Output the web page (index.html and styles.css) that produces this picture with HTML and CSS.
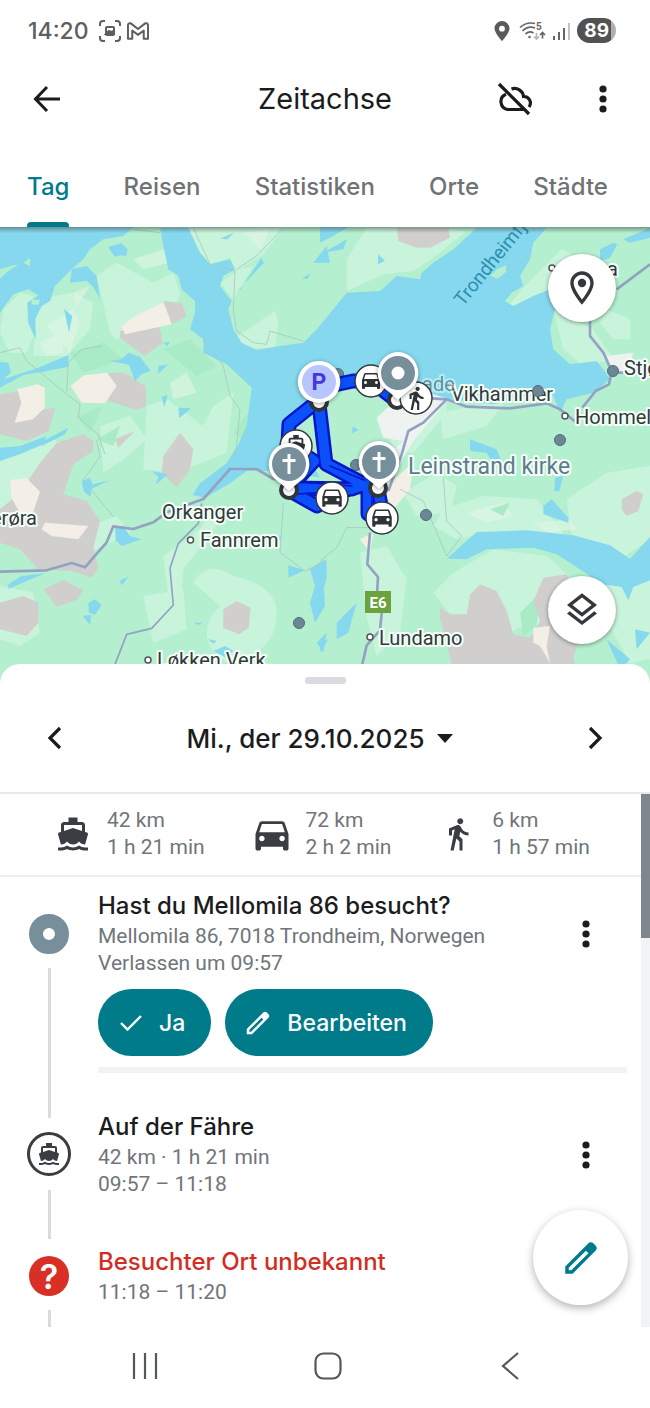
FILE: index.html
```html
<!DOCTYPE html>
<html lang="de">
<head>
<meta charset="utf-8">
<meta name="viewport" content="width=device-width, initial-scale=1">
<title>Zeitachse</title>
<link rel="stylesheet" href="styles.css">
</head>
<body>
<svg class="sprite" aria-hidden="true">
  <symbol id="ferry" viewBox="0 0 24 24"><path d="M20 21c-1.39 0-2.78-.47-4-1.32-2.44 1.71-5.56 1.71-8 0C6.78 20.53 5.39 21 4 21H2v2h2c1.38 0 2.74-.35 4-.99 2.52 1.29 5.48 1.29 8 0 1.26.65 2.62.99 4 .99h2v-2h-2zM3.95 19H4c1.6 0 3.02-.88 4-2 .98 1.12 2.4 2 4 2s3.02-.88 4-2c.98 1.12 2.4 2 4 2h.05l1.89-6.68c.08-.26.06-.54-.06-.78s-.34-.42-.6-.5L20 10.62V6c0-1.1-.9-2-2-2h-3V1H9v3H6c-1.1 0-2 .9-2 2v4.62l-1.29.42c-.26.08-.48.26-.6.5s-.15.52-.06.78L3.95 19zM6 6h12v3.97L12 8 6 9.970V6z"/></symbol>
  <symbol id="car" viewBox="0 0 24 24"><path d="M18.92 6.01C18.72 5.42 18.16 5 17.5 5h-11c-.66 0-1.21.42-1.42 1.01L3 12v8c0 .55.45 1 1 1h1c.55 0 1-.45 1-1v-1h12v1c0 .55.45 1 1 1h1c.55 0 1-.45 1-1v-8l-2.080-5.990zM6.5 16c-.83 0-1.5-.67-1.5-1.5S5.67 13 6.5 13s1.5.67 1.5 1.5S7.33 16 6.5 16zm11 0c-.83 0-1.5-.67-1.5-1.5s.67-1.5 1.5-1.5 1.5.67 1.5 1.5-.67 1.5-1.5 1.5zM5 11l1.5-4.5h11L19 11H5z"/></symbol>
  <symbol id="walk" viewBox="0 0 24 24"><path d="M13.5 5.5c1.1 0 2-.9 2-2s-.9-2-2-2-2 .9-2 2 .9 2 2 2zM9.8 8.9L7 23h2.1l1.8-8 2.1 2v6h2v-7.5l-2.1-2 .6-3C14.8 12 16.8 13 19 13v-2c-1.9 0-3.5-1-4.3-2.4l-1-1.6c-.4-.6-1-1-1.7-1-.3 0-.5.1-.8.1L6 8.3V13h2V9.6l1.8-.7z"/></symbol>
  <symbol id="pen" viewBox="0 0 24 24"><path d="M20.41 4.94l-1.35-1.35c-.78-.78-2.05-.78-2.83 0L3 16.82V21h4.18L20.41 7.77c.79-.78.79-2.05 0-2.83zM6.41 19.06L5 19v-1.36l9.82-9.82 1.41 1.41z"/></symbol>
  <symbol id="more" viewBox="0 0 8 28"><circle cx="4" cy="4" r="3.6"/><circle cx="4" cy="14" r="3.6"/><circle cx="4" cy="24" r="3.6"/></symbol>
  <symbol id="cross" viewBox="0 0 20 22"><path d="M8.5 1h3v5h5v3h-5v12h-3V9h-5V6h5z"/></symbol>
</svg>

<div class="screen">
  <div class="status">
    <span class="clock">14:20</span>
    <svg width="22" height="22" viewBox="0 0 22 22" fill="none" stroke="#5f5f5f" stroke-width="2"><path d="M1 6V4a3 3 0 0 1 3-3h2M16 1h2a3 3 0 0 1 3 3v2M21 16v2a3 3 0 0 1-3 3h-2M6 21H4a3 3 0 0 1-3-3v-2"/><rect x="7" y="7" width="8" height="8" rx="1"/><path d="M7 14l3-3 2 1 3-1v3z" fill="#5f5f5f"/></svg>
    <svg width="22" height="18" viewBox="0 0 23 18" fill="none" stroke="#5f5f5f" stroke-width="2.100" stroke-linejoin="round"><path d="M1 3.200Q1 1 3 1h1l7.500 6L19 1h1q2 0 2 2.200V17h-4.500V8.500L11.500 13 5.500 8.500V17H1z"/></svg>
    <span class="spacer"></span>
    <svg width="16" height="20" viewBox="0 0 16 20" fill="#5a5a5a"><path fill-rule="evenodd" d="M8 0a7.500 7.500 0 0 1 7.500 7.500C15.500 12 8 20 8 20S.5 12 .5 7.500A7.500 7.500 0 0 1 8 0zm0 4.800a2.900 2.900 0 1 0 0 5.800 2.900 2.900 0 0 0 0-5.800z"/></svg>
    <svg class="wifi" width="28" height="20" viewBox="0 0 28 20" fill="none" stroke="#666" stroke-width="1.700"><path d="M1 6.500Q7.500.5 16 2.500M3.500 10Q9 4.500 16 7M6.500 13q4-3.500 8-1"/><circle cx="10.500" cy="16" r="1.300" fill="#666" stroke="none"/><path d="M17.500 12v6m-2.500-2.500 2.500 2.500 2.500-2.500" stroke="#b5b5b5"/><path d="M23.500 17.500v-6m-2.500 2.500 2.500-2.500 2.500 2.500"/><text x="17" y="9" class="wifi-gen">5</text></svg>
    <svg width="18" height="18" viewBox="0 0 18 18" fill="#666"><path d="M0 14h2v4H0zM5 10h2v8H5zM10 6h2v12h-2z"/><path d="M15 1h2v17h-2z" fill="#c4c4c4"/></svg>
    <span class="battery">89</span>
  </div>

  <header class="appbar">
    <button class="icon-btn" aria-label="Zurück"><svg width="28" height="28" viewBox="0 0 28 28" fill="none" stroke="#1b1c1e" stroke-width="3"><path d="M27 14H3M14 2 2.500 14 14 26"/></svg></button>
    <h1>Zeitachse</h1>
    <button class="icon-btn cloud" aria-label="Sicherung aus"><svg width="36" height="34" viewBox="0 0 36 34" fill="none" stroke="#1b1c1e" stroke-width="3.200"><path d="M2 2l30 30M26.500 27.500H10.500A8 8 0 0 1 9 12.200M14.500 7A9 9 0 0 1 26.500 14.500 6.500 6.500 0 0 1 32 25"/></svg></button>
    <button class="icon-btn" aria-label="Mehr"><svg width="8" height="28" fill="#1b1c1e"><use href="#more"/></svg></button>
  </header>

  <nav class="tabs">
    <a class="tab active" href="#tag">Tag</a>
    <a class="tab" href="#reisen">Reisen</a>
    <a class="tab" href="#statistiken">Statistiken</a>
    <a class="tab" href="#orte">Orte</a>
    <a class="tab" href="#staedte">Städte</a>
  </nav>

  <main class="map">
    <svg class="map-canvas" viewBox="0 3 1950 1383" preserveAspectRatio="xMidYMin slice" role="img" aria-label="Karte der Region Trondheim">
      <rect y="0" width="1950" height="1400" fill="#b4f0cf"/>
      <!-- pale vegetation -->
      <g fill="#c9f4dc">
        <path d="M290 150l60-40 110 60 60-30 20 60-30 90-100 10-60 40-20-20zM10 250l50-50 40 10-20 70 20 50-20 50-50 0-30-60zM110 260l50-50 60-10 60 30-10 80-70 80-100 0zM560 5h290l-60 80-80 50-20-40-60 20-40-50zM660 170l60-40 40-10-60 100zM715 330l110-75 10 30-10 80-100 0zM440 540l60-20 110 80 30-60 60-40-20 180-150 60-100-10zM300 600l90-30 50 70-70 60-60 40zM0 700l160-60 60 40-120 120 0 80-100-30zM100 900l90 30 160-60 40 50-120 60-110 0zM0 1080l100 20 20 120-60 40-60-20zM430 1110l120-20 10 120-100 40zM580 1070q40-70 120-20 130 30 130 110 0 90-80 130-60 60-120-30-30-60 30-120zM490 990l110-80 30-50 40 10-60 80-60 80-10 160-30-40z"/>
        <path d="M1040 100l60-95h190l110 10-100 80-60 40-90 10-110 50zM1575 180l110-110 40 20-60 90-60 50-80 10zM1660 250l120 60 60 90-90 20-60-50zM1820 250l70 30 0 60-50 0-40-50zM1160 600l60-80 120-10 0 50-100 120-60-10zM1320 560l200-40-60 80-130 40zM1210 800l100-60 60 40-20 80-100 10zM1330 850l120-40 160 10 80 100-40 30-200-30-80 20-70-40zM1700 820l120-80 130-20v220l-90 60-140-30zM1300 1100l60-60 120-70 160 20 90 80-30 160-120-40-90 60-60-20-50-30zM1080 980l80-20 60 100-20 160-70 70-30-120z"/>
        <path d="M1840 1010l110-10v300l-60 10-90-160z"/>
      </g>
      <g fill="#e3f5e6" opacity=".6"><path d="M140 300l80-50 20 40-30 90zM220 200l50-20-40 60zM400 100l90-30 20 40-80 20zM730 20l80-10-30 60zM510 470l50-30 30 60-70 20zM120 350l60-30 10 60-50 10zM1400 860l110-30 30 40-80 20zM1600 890l110-10 20 30-90 10z"/></g>
      <g fill="#a9ebc6"><path d="M210 380l100-30 60 50-120 40zM490 370l80-30 80 80-60 30zM700 620l60-80 0 120zM230 570l80-30-40 80zM290 640l70-40-20 60z" /><path d="M1560 1160l60-60-10 100-40 30zM1470 850l60-20-20 40z"/></g>
      <!-- rock and built-up areas -->
      <g fill="#d1cfcd">
        <path d="M490 225l55 5 15 40-45 25zM360 315l90-15 30 5 8 45-55 40-73-55zM325 440l50 0 62 40 2 60-30 12-85-28zM0 505l60-10 40 60 66-10-20 70-66 30-80-20zM170 650l80-25 30 20v30l-60 40-30 90 70 20 40 60-20 80 15 60-20 30-60-20-100-5-55-60-60-20v-100l60-50 60-90zM345 640l60-25-50 50zM490 690l50-70 40 50-10 60-40 55-45-45zM130 1090l60-28 60 30-20 30-60 20zM0 1130l70-20 45 20v60l-35 40-80-20zM670 1150l40-25 42 20-5 60-30 20-48-20z"/>
        <path d="M1190 5h155l5 30-60 30-40 0-55-20zM1320 1145l30 20 50 0 10-60 30-30 50 20 30 60 20 70 50 10 30-50-20-60 30-70 70-10 40 60-20 50 20 40 0 40-20 60 20 80h-370l-30-120-20-80zM1865 820l45-25 20 10-15 50-35 15-15-20z"/>
      </g>
      <g fill="#f4efe6"><path d="M490 230l25 65-140 30-10-25 40-30zM212 480l40-32 70-8 28 40-35 52-70-2zM52 490l60-15 22 10v60l-35 35-55 10 20-60zM30 762l50-5 40 40-20 60-30 20-35-60zM135 890l130 10-30 40-80-10-30-20z"/><path d="M1600 1205l50-5-10 60 10 50-30-50-20-10zM1170 770l70-60-10 80-50 60-20-40zM1080 940l40-20-10 60z"/></g>
      <!-- Trondheim suburbs -->
      <path d="M1210 500l90 0 50 15-60 70-50 60-60 100-20 40-40-60 90-80-60-10-20-60zM1820 390l80-10-20 60-50 10z" fill="#eef2f1"/>
      <g fill="#86d8ee">
        <path d="M480 5L490 60 505 130 535 150 545 190 585 225 585 260 570 310 610 340 610 380 680 415 755 485 740 600 715 655 680 712 600 772 578 807 615 815 690 772 740 735 850 735 960 755 930 700 850 650 850 600 920 540 980 500 1040 460 1100 460 1180 480 1300 505 1350 520 1480 535 1600 510 1660 510 1680 560 1700 520 1780 500 1830 460 1810 430 1790 405 1710 415 1660 370 1650 310 1665 250 1650 190 1600 210 1540 240 1515 225 1535 200 1570 180 1560 150 1590 100 1600 50 1640 5 1430 5 1360 70 1300 110 1265 140 1260 160 1190 150 1140 195 1040 200 1000 250 950 310 910 350 840 360 770 372 725 350 700 310 685 250 695 225 660 180 670 150 705 130 690 100 630 115 600 80 565 5z"/>
        <path d="M0 0H405L370 30 310 40 270 70 250 100 215 130 165 180 150 225 125 240 105 280 108 340 85 290 82 230 115 208 85 190 40 205 10 245 0 260z"/>
        <path d="M215 130l45-10 30 30 10 68-20-35-20-18-50 5zM722 190l62-95 8 15-78 84zM0 408l25 2 8 30-23 20 105-35 90-38v35l-75 15-60 10-70 38zM192 248l25 22-10 50zM325 62l40-10 18 18-5 20-18-2-15 5-15-20zM330 405l35-5 20-20 35 12 32 42-27 10-20 22-18-50zM475 420l30-5-30 28zM485 512l18-4-10 36zM535 545l38 2-35 30zM488 350l22-2-8 12zM660 38l42-18-20 20zM120 650l85-45-10 20-70 35zM905 158l26-16-8 16zM940 110l40-50 10 50z"/>
        <path d="M0 665l60-5 80-30-10 25-70 30-60 20zM245 765l25-10 8 20 50-12-52 25-5 25-20-18zM455 735l48 10-36 32 8-25zM345 905l25-5 20 30 35 10-60 20-18-18zM25 1075l40-25 70-8-60 25-50 22zM265 1130l20-10 20 18-20 28-18-6zM248 1170l25-3-2 30zM358 1065l28-15-20 28zM580 1190h30l-15 6zM625 1240l25 5-10 8zM640 1275l35-15 25 15-20 20zM865 1018l50 15-50 22zM930 1030l45-30-5 60 5 80-30 50-15-60 15-50zM950 1250l30-30-10 60zM830 925l15 10-10 15z"/>
        <path d="M960 0h90l-50 30-40 20zM970 80l70-40-10 30zM1135 85l20 20-22 10zM1800 70l40-20 12 5-22 40-30 10zM1870 40l80-35v30l-60 15zM1410 640l80 30 20 50-30-5-20-35-50-5zM1630 840l25-20 50 55v15l-75-25zM1665 755l25-5-12 45h-15zM1340 998l90-80 150-5 140 15 110 30 60 40 60-65v130l-50 20-15 40-20-40-65-10-40-30-90-58-70-20-140 5-60 30z"/>
        <path d="M1010 1190l60-60-25 90-35 20zM960 1030l20-30v60l-20 60zM960 1250l25-10-25 40zM1820 1240l70 60-30 30zM1905 1210l45 10-40 50zM1058 600l18 12-20 10z"/>
      </g>
      <path d="M0 130l55-16-35 25-20 20zM70 110l20-15v25zM95 220l25 2-5 15-20-2zM1470 150l20-20 28-12 0 20-25 20z" fill="#b4f0cf"/>
      <!-- minor roads -->
      <g fill="none" stroke="#a9c6bd" stroke-width="3" opacity=".8">
        <path d="M0 380l60-15 20 40 60 50 60 50 40 30-5 40 60 50 20 60M400 10l80 10M580 5l50 110 75 20-5 120 10 60 50 35 40 5 10-40 100 30M710 130l60-40 80-85M200 500l5-90 40-40 60-10M610 340l60 80 20 90 30 40-15 150M290 642l10 50-50 70 90 110M850 830l-10 150 75 55 60-30M1200 790l70 35 70 165 45-60-45-45-10-130M1120 905h-80l-30 60-50 40"/>
      </g>
      <!-- main roads -->
      <g fill="none" stroke="#93a2c2" stroke-linejoin="round">
        <path stroke-width="8" d="M0 1037l140-4 75-22 40 13 30-35 35-40 20-48 60 8 60-20 40-30 110-40 80-90h80l50 30 60 5M1110 920l-8 95 32 38-4 70 15 40-5 50-40 45-15 65M1260 515l80 5-70 70-45 25-20 70-40 110M1340 520l60 22 130 5 110-15 40 18 50 40"/>
        <path stroke-width="8" d="M1770 270v60l40 50 25 55-8 40-40 20-40 50M1850 190l100-75M1830 440l40 0"/>
        <path stroke-width="5" d="M345 1315l35-90 75-18 65-70-10-110 25-75 60-60 10-60"/>
      </g>
      <!-- place labels and pins, drawn in screen units -->
      <g transform="scale(3) translate(0 -226)">
        <g class="place">
          <text x="162" y="519">Orkanger</text>
          <text x="200" y="547">Fannrem</text>
          <text x="37" y="525" text-anchor="end">erøra</text>
          <text x="157" y="667">Løkken Verk</text>
          <text x="379" y="645">Lundamo</text>
          <text x="451" y="401">Vikhammer</text>
          <text x="575" y="424">Hommel</text>
          <text x="624" y="375">Stjø</text>
          <text x="618" y="276" text-anchor="end">a</text>
          <text x="422" y="391" opacity=".45">ade</text>
        </g>
        <text class="place poi" x="408" y="474">Leinstrand kirke</text>
        <text class="fjord" transform="translate(463 307) rotate(-51)">Trondheimfjord</text>
        <g fill="#fff" stroke="#555" stroke-width="1.500"><circle cx="190.500" cy="540" r="3"/><circle cx="148" cy="660" r="3"/><circle cx="370" cy="637" r="3"/><circle cx="565" cy="416" r="3"/><circle cx="552" cy="268" r="3"/></g>
        <g fill="#6b8796" stroke="#536b79"><circle cx="613" cy="371" r="5.500"/><circle cx="538" cy="391" r="5.500"/><circle cx="560" cy="440" r="5.500"/><circle cx="426" cy="515" r="5.500"/><circle cx="299" cy="623" r="5.500"/><circle cx="338" cy="374" r="5.500"/><circle cx="356" cy="465" r="5.500"/></g>
        <rect x="365" y="591" width="26" height="22" fill="#6ba23e"/><text x="378" y="608" class="shield">E6</text>
        <!-- travelled route -->
        <g fill="none" stroke-linejoin="round" stroke-linecap="round">
          <path stroke="#0717c6" stroke-width="15" d="M314 404l-25 20-1 20 26 17-20 22M319 404l7 60 36 19 16 8M292 488l60 1 20-10M292 492l25 14 22-14 30-8M368 485v29M378 490l5 26M325 387l28-6h18l22 17"/>
          <path stroke="#0b50fa" stroke-width="10" d="M314 404l-25 20-1 20 26 17-20 22M319 404l7 60 36 19 16 8M292 488l60 1 20-10M292 492l25 14 22-14 30-8M368 485v29M378 490l5 26M325 387l28-6h18l22 17"/>
          <path stroke="#0717c6" stroke-width="1.500" d="M298 482l54 4M298 494l40-3M330 466l34 14M372 494v20"/>
        </g>
        <g fill="#fff" stroke="#333638" stroke-width="4"><circle cx="319" cy="402" r="8"/><circle cx="397" cy="400" r="8"/><circle cx="289" cy="490" r="8"/><circle cx="378" cy="488" r="8"/></g>
        <g fill="#fff" stroke="#35383b" stroke-width="1.500"><circle cx="371" cy="381" r="16"/><circle cx="416" cy="398" r="16"/><circle cx="296" cy="446" r="16"/><circle cx="332" cy="498" r="16"/><circle cx="382" cy="518" r="16"/></g>
        <g fill="#2f3336">
          <use href="#car" x="359" y="368" width="24" height="24"/>
          <use href="#walk" x="403" y="385" width="26" height="26"/>
          <use href="#ferry" x="285" y="434" width="22" height="22"/>
          <use href="#car" x="319" y="484" width="26" height="26"/>
          <use href="#car" x="369" y="504" width="26" height="26"/>
        </g>
        <g fill="#fff" class="pin">
          <path d="M319 361a21 21 0 0 1 11 39q-6 3-11 3t-11-3a21 21 0 0 1 11-39z"/>
          <path d="M398 352a21 21 0 0 1 14 36q-8 6-14 12-6-6-14-12a21 21 0 0 1 14-36z"/>
          <path d="M289 443a21 21 0 0 1 14 36q-8 6-14 12-6-6-14-12a21 21 0 0 1 14-36z"/>
          <path d="M379 441a21 21 0 0 1 14 36q-8 6-14 12-6-6-14-12a21 21 0 0 1 14-36z"/>
        </g>
        <circle cx="319" cy="382" r="17" fill="#b8c5ff"/><text x="319" y="390" class="parking">P</text>
        <g fill="#778f9b"><circle cx="398" cy="373" r="17"/><circle cx="289" cy="464" r="17"/><circle cx="379" cy="462" r="17"/></g>
        <g fill="#fff"><circle cx="398" cy="373" r="6.500"/><use href="#cross" x="279" y="453" width="20" height="22"/><use href="#cross" x="369" y="451" width="20" height="22"/></g>
      </g>
    </svg>
    <button class="map-btn locate" aria-label="Orte anzeigen"><svg width="40" height="40" viewBox="0 0 24 24" fill="#35383b"><path d="M12 2C8.130 2 5 5.130 5 9c0 5.250 7 13 7 13s7-7.750 7-13c0-3.870-3.130-7-7-7zM7 9c0-2.760 2.240-5 5-5s5 2.240 5 5c0 2.880-2.880 7.190-5 9.880C9.920 16.210 7 11.850 7 9z"/><circle cx="12" cy="9" r="2.500"/></svg></button>
    <button class="map-btn layers" aria-label="Kartenebenen"><svg width="40" height="40" viewBox="0 0 24 24" fill="#35383b"><path d="M12 2 3 9l9 7 9-7zm0 2.530L17.740 9 12 13.470 6.260 9zM12 18.540l-7.370-5.730L3 14.070l9 7 9-7-1.630-1.270z"/></svg></button>
  </main>

  <section class="sheet">
    <div class="handle"></div>
    <div class="datebar">
      <button class="icon-btn" aria-label="Vorheriger Tag"><svg width="16" height="24" viewBox="0 0 16 24" fill="none" stroke="#1b1c1e" stroke-width="3.200"><path d="M14 2 4 12l10 10"/></svg></button>
      <button class="date">Mi., der 29.10.2025<svg width="16" height="9" viewBox="0 0 16 9" fill="#1b1c1e"><path d="M0 0h16L8 9z"/></svg></button>
      <button class="icon-btn" aria-label="Nächster Tag"><svg width="16" height="24" viewBox="0 0 16 24" fill="none" stroke="#1b1c1e" stroke-width="3.200"><path d="M2 2l10 10L2 22"/></svg></button>
    </div>
    <div class="scroll">
      <div class="content">
        <div class="stats">
          <div class="stat"><span class="stat-icon"><svg width="36" height="36"><use href="#ferry"/></svg></span><p>42 km<br>1 h 21 min</p></div>
          <div class="stat"><span class="stat-icon"><svg width="44" height="44"><use href="#car"/></svg></span><p>72 km<br>2 h 2 min</p></div>
          <div class="stat"><span class="stat-icon"><svg width="36" height="36"><use href="#walk"/></svg></span><p>6 km<br>1 h 57 min</p></div>
        </div>
        <article class="entry first">
          <div class="rail"><span class="dot place-dot"></span><span class="line"></span></div>
          <div class="body">
            <div class="row">
              <div class="text"><h2>Hast du Mellomila 86 besucht?</h2><p>Mellomila 86, 7018 Trondheim, Norwegen</p><p>Verlassen um 09:57</p></div>
              <button class="icon-btn" aria-label="Mehr"><svg width="8" height="28" fill="#1b1c1e"><use href="#more"/></svg></button>
            </div>
            <div class="actions">
              <button class="pill"><svg width="22" height="18" viewBox="0 0 22 18" fill="none" stroke="#fff" stroke-width="2.400"><path d="M1 9l6.500 6.500L21 2"/></svg>Ja</button>
              <button class="pill edit"><svg width="30" height="30" fill="#fff"><use href="#pen"/></svg>Bearbeiten</button>
            </div>
            <div class="divider"></div>
          </div>
        </article>
        <article class="entry second">
          <div class="rail"><span class="line short"></span><span class="dot ferry-dot"><svg width="24" height="24" fill="#3a3d42"><use href="#ferry"/></svg></span><span class="line"></span></div>
          <div class="body">
            <div class="row">
              <div class="text"><h2>Auf der Fähre</h2><p>42 km · 1 h 21 min</p><p>09:57 – 11:18</p></div>
              <button class="icon-btn" aria-label="Mehr"><svg width="8" height="28" fill="#1b1c1e"><use href="#more"/></svg></button>
            </div>
          </div>
        </article>
        <article class="entry third">
          <div class="rail"><span class="dot unknown-dot">?</span><span class="line"></span></div>
          <div class="body"><div class="text"><h2 class="warn">Besuchter Ort unbekannt</h2><p>11:18 – 11:20</p></div></div>
        </article>
      </div>
      <div class="track"><div class="thumb"></div></div>
      <button class="fab" aria-label="Bearbeiten"><svg width="42" height="42" fill="#007b8a"><use href="#pen"/></svg></button>
    </div>
  </section>

  <nav class="sysnav">
    <button class="icon-btn" aria-label="Letzte Apps"><svg width="26" height="28" viewBox="0 0 26 28" stroke="#55585a" stroke-width="2.200"><path d="M2 1v26M13 1v26M24 1v26"/></svg></button>
    <button class="icon-btn" aria-label="Startseite"><svg width="28" height="28" viewBox="0 0 28 28" fill="none" stroke="#55585a" stroke-width="2.200"><rect x="1.500" y="1.500" width="25" height="25" rx="8"/></svg></button>
    <button class="icon-btn" aria-label="Zurück"><svg width="18" height="28" viewBox="0 0 18 28" fill="none" stroke="#55585a" stroke-width="2.200"><path d="M17 1 2 14l15 13"/></svg></button>
  </nav>
</div>
</body>
</html>
```
FILE: styles.css
```css
* { box-sizing: border-box; }
body { margin: 0; background: #fff; color: #1b1c1e; font-family: Inter, Roboto, sans-serif; }
button { border: 0; padding: 0; background: none; font: inherit; color: inherit; cursor: pointer; }
h1, h2, p { margin: 0; }
svg { display: block; flex: none; }
.sprite { position: absolute; width: 0; height: 0; }
.screen { display: flex; flex-direction: column; min-height: 100vh; overflow: hidden; }

.status { display: flex; align-items: center; gap: 6px; height: 61px; padding: 0 34px 0 28px; color: #5f5f5f; }
.clock { font-size: 23px; font-weight: 500; margin-right: 4px; }
.spacer { flex: 1; }
.wifi { margin-left: 3px; }
.wifi-gen { font: 700 10px Roboto, sans-serif; fill: #666; stroke: none; }
.battery { padding: 0 7px; border-radius: 13px; background: linear-gradient(to right, #525252 88%, #b0b0b0 88%); color: #fff; font-size: 19px; font-weight: 700; line-height: 25px; }

.icon-btn { display: flex; align-items: center; justify-content: center; width: 48px; height: 48px; flex: none; }
.appbar { display: grid; grid-template-columns: 1fr auto 1fr 48px; align-items: center; height: 75px; padding: 0 23px; }
.appbar h1 { font-size: 29px; font-weight: 400; grid-column: 2; padding-left: 48px; }
.appbar .cloud { justify-self: end; margin-right: 40px; }

.tabs { display: flex; justify-content: space-between; height: 91px; padding: 0 42px 0 27px; }
.tab { position: relative; display: flex; align-items: center; padding-top: 9px; color: #6f7376; font-size: 24px; font-weight: 500; text-decoration: none; }
.tab.active { color: #007b8a; }
.tab.active::after { content: ""; position: absolute; left: 0; right: 0; bottom: 0; height: 5px; border-radius: 4px 4px 0 0; background: #007b8a; }

.map { position: relative; height: 461px; overflow: hidden; }
.map::before { content: ""; position: absolute; left: 0; right: 0; top: 0; height: 6px; background: linear-gradient(rgba(60, 70, 70, .5), rgba(60, 70, 70, 0)); }
.map-canvas { width: 100%; height: 100%; }
.place { font: 20px Roboto, sans-serif; fill: #33383b; stroke: #f4fff8; stroke-width: 4px; stroke-linejoin: round; paint-order: stroke; }
.poi { font-size: 23px; fill: #5d7b8b; }
.fjord { font: 19px Roboto, sans-serif; fill: #2b8fae; }
.shield { font: 700 15px Roboto, sans-serif; fill: #fff; text-anchor: middle; }
.parking { font: 700 23px Roboto, sans-serif; fill: #4338e0; text-anchor: middle; }
.pin { filter: drop-shadow(0 1px 2px rgba(0, 0, 0, .4)); }
.map-btn { position: absolute; right: 34px; display: flex; align-items: center; justify-content: center; width: 68px; height: 68px; border-radius: 50%; background: #fff; box-shadow: 0 1px 4px rgba(0, 0, 0, .4); }
.locate { top: 27px; }
.layers { top: 349px; }

.sheet { position: relative; display: flex; flex-direction: column; flex: 1; margin-top: -24px; border-radius: 20px 20px 0 0; background: #fff; }
.handle { width: 41px; height: 7px; margin: 13px auto 0; border-radius: 3px; background: #dadbe1; }
.datebar { display: flex; align-items: center; justify-content: space-between; height: 108px; padding: 0 30px; }
.date { display: flex; align-items: center; gap: 12px; padding-right: 11px; font-size: 26px; font-weight: 500; }

.scroll { position: relative; display: flex; flex: 1; border-top: 2px solid #e8eaec; }
.content { flex: 1; min-width: 0; }
.track { width: 9px; background: #f1f3f4; }
.thumb { height: 144px; background: #80868d; }
.stats { display: flex; justify-content: space-between; height: 83px; padding: 13px 51px 0; border-bottom: 2px solid #eceeef; }
.stat { display: flex; gap: 12px; color: #70757a; font: 21px/27px Roboto, sans-serif; }
.stat-icon { display: flex; align-items: center; justify-content: center; width: 44px; height: 54px; fill: #3a3d42; }

.entry { display: grid; grid-template-columns: 98px 1fr; }
.rail { display: flex; flex-direction: column; align-items: center; gap: 14px; }
.line { flex: 1; width: 3px; background: #dadbdc; }
.line.short { flex: none; height: 14px; }
.dot { display: flex; align-items: center; justify-content: center; border-radius: 50%; }
.place-dot { width: 40px; height: 40px; border: 14px solid #778f9b; }
.ferry-dot { width: 44px; height: 44px; border: 3px solid #3a3d42; }
.unknown-dot { width: 40px; height: 40px; background: #d93025; color: #fff; font-size: 34px; font-weight: 600; }
.body { min-width: 0; }
.row { display: flex; align-items: center; justify-content: space-between; padding-right: 31px; }
.text h2 { padding-bottom: 2px; font-size: 24px; font-weight: 500; line-height: 31px; }
.text p { color: #70757a; font: 21px/27px Roboto, sans-serif; }
.text .warn { color: #d22d23; }
.first .rail { padding-top: 37px; }
.first .body { padding-top: 13px; }
.second { min-height: 135px; }
.second .body, .third .body { padding-top: 7px; }
.third { min-height: 88px; }
.third .rail { padding-top: 17px; }
.actions { display: flex; gap: 14px; margin-top: 12px; }
.pill { display: flex; align-items: center; gap: 17px; height: 67px; padding: 0 26px 0 22px; border-radius: 34px; background: #007b8a; color: #fff; font-size: 23px; font-weight: 500; }
.pill.edit { gap: 14px; padding-left: 18px; }
.divider { height: 6px; margin: 11px 14px 31px 0; background: #f1f3f4; }
.fab { position: absolute; right: 22px; bottom: 22px; display: flex; align-items: center; justify-content: center; width: 95px; height: 95px; border-radius: 50%; background: #fff; box-shadow: 0 3px 8px rgba(0, 0, 0, .3); }

.sysnav { display: flex; align-items: center; justify-content: space-between; height: 81px; padding: 0 116px 4px 121px; }
```
